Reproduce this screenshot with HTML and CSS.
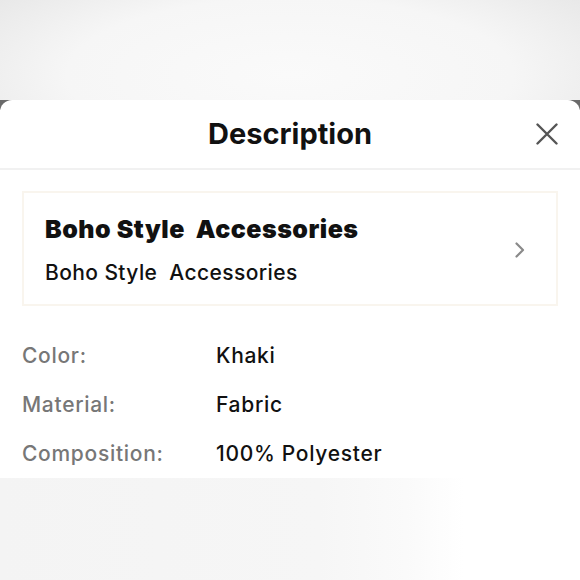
FILE: index.html
```html
<!DOCTYPE html>
<html lang="en">
<head>
<meta charset="utf-8">
<title>Description</title>
<link rel="stylesheet" href="styles.css">
</head>
<body>
<div class="backdrop"></div>
<div class="sheet-wrap">
  <section class="sheet">
    <header class="sheet-header">
      <span></span>
      <h1 class="sheet-title">Description</h1>
      <button class="close" aria-label="Close">
        <svg width="22" height="22" viewBox="0 0 22 22"><path d="M1.5 1.5 L20.5 20.5 M20.5 1.5 L1.5 20.5" stroke="#555" stroke-width="2.4" stroke-linecap="round" fill="none"/></svg>
      </button>
    </header>
    <div class="sheet-body">
      <a class="card" href="#">
        <div class="card-text">
          <div class="card-title">Boho Style&nbsp; Accessories</div>
          <div class="card-sub">Boho Style&nbsp; Accessories</div>
        </div>
        <svg class="chevron" width="12" height="16" viewBox="0 0 12 16"><path d="M2.5 1.5 L9 8 L2.5 14.5" stroke="#8a8a8a" stroke-width="2.2" fill="none" stroke-linecap="round" stroke-linejoin="round"/></svg>
      </a>
      <dl class="attrs">
        <dt>Color:</dt><dd>Khaki</dd>
        <dt>Material:</dt><dd>Fabric</dd>
        <dt>Composition:</dt><dd>100% Polyester</dd>
      </dl>
    </div>
  </section>
</div>
<div class="below"></div>
</body>
</html>
```
FILE: styles.css
```css
html, body {
  margin: 0;
  padding: 0;
  background: #fff;
  font-family: Inter, "Noto Sans", "Liberation Sans", sans-serif;
  color: #111;
}
.backdrop {
  height: 100px;
  background: radial-gradient(ellipse 70% 140% at 50% 75%, #fafafa 0%, #f6f6f6 55%, #e4e4e4 100%);
}
.sheet-wrap {
  background: linear-gradient(#6a6a6a 0 10px, #fff 10px);
}
.sheet {
  background: #fff;
  border-radius: 12px 12px 0 0;
}
.sheet-header {
  height: 68px;
  display: grid;
  grid-template-columns: 1fr auto 1fr;
  align-items: center;
  border-bottom: 2px solid #f1f1f1;
}
.sheet-title {
  margin: 0;
  font-size: 29px;
  font-weight: 700;
  line-height: 68px;
  color: #111;
}
.close {
  justify-self: end;
  margin-right: 22px;
  padding: 0;
  border: 0;
  background: none;
  width: 22px;
  height: 22px;
  display: flex;
}
.sheet-body {
  padding: 21px 22px 11px;
}
.card {
  display: flex;
  align-items: center;
  justify-content: space-between;
  border: 2px solid #f9f5ee;
  padding: 21px 30px 18px 21px;
  text-decoration: none;
  color: #111;
}
.card-title {
  font-size: 25px;
  font-weight: 900;
  line-height: 30px;
  letter-spacing: 0.5px;
  white-space: pre;
}
.card-sub {
  margin-top: 16px;
  font-size: 21px;
  font-weight: 500;
  line-height: 26px;
  letter-spacing: 0.4px;
}
.chevron {
  display: block;
}
.attrs {
  margin: 37px 0 0;
  display: grid;
  grid-template-columns: 194px 1fr;
  row-gap: 23px;
  font-size: 21px;
  line-height: 26px;
  letter-spacing: 0.7px;
}
.attrs dt {
  color: #777;
  font-weight: 500;
}
.attrs dd {
  margin: 0;
  color: #111;
  font-weight: 500;
}
.below {
  height: 110px;
  background: linear-gradient(to right, #f4f4f4 0%, #f6f6f6 55%, #fafafa 70%, #fff 80%);
}
```
